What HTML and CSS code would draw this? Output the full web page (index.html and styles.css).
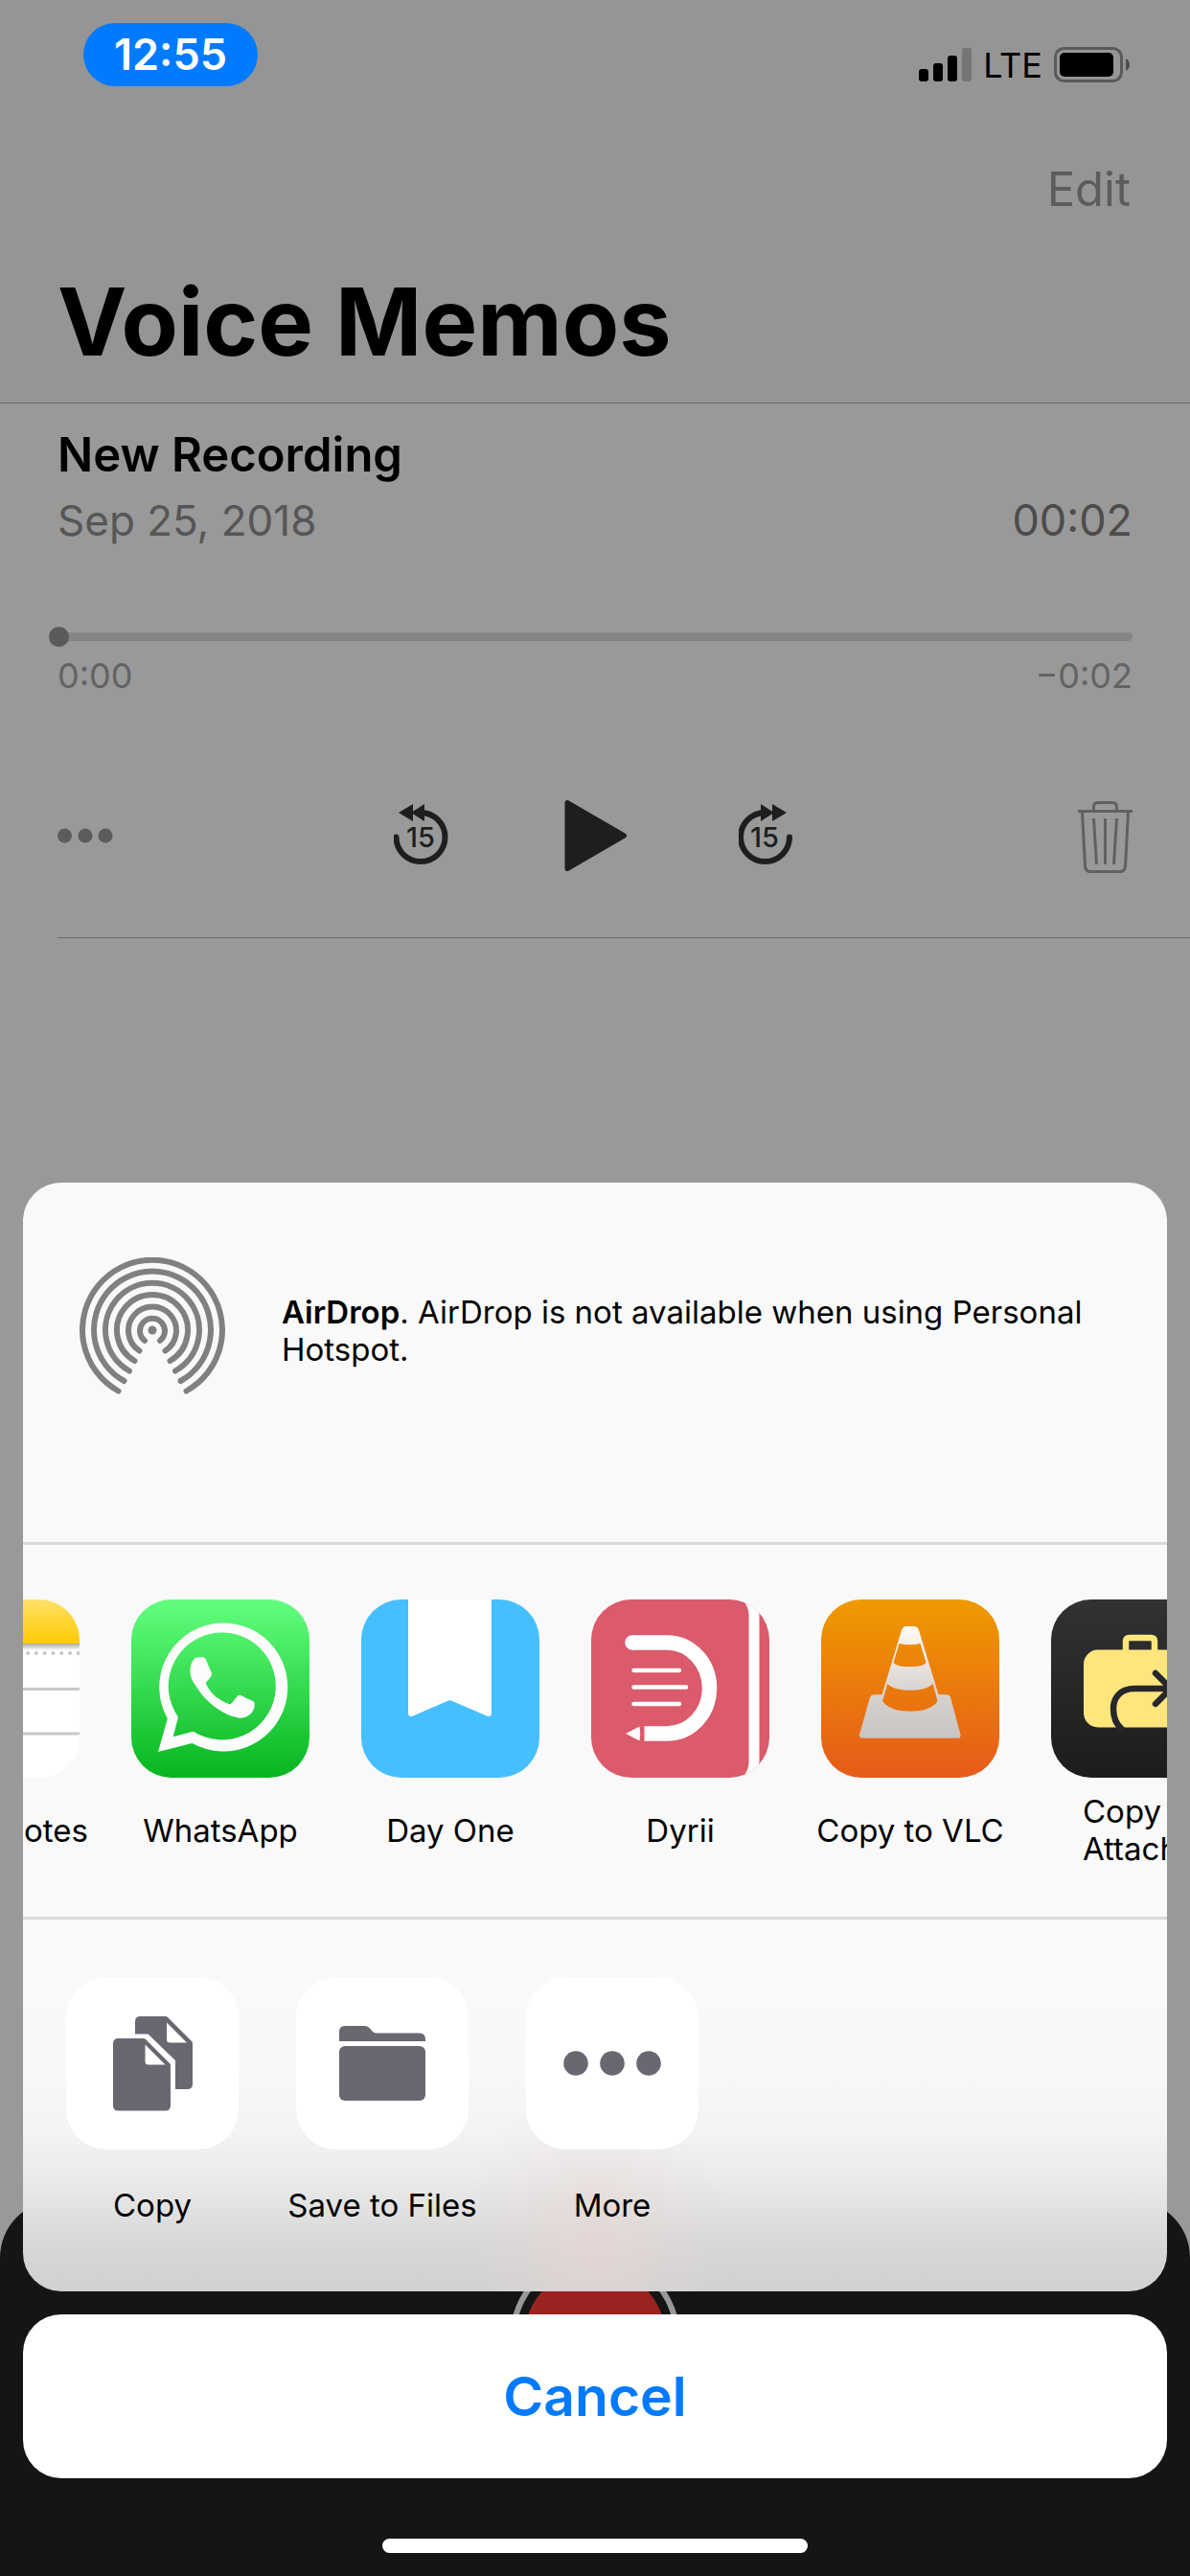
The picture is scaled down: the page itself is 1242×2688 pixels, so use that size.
FILE: index.html
```html
<!DOCTYPE html>
<html lang="en">
<head>
<meta charset="utf-8">
<meta name="viewport" content="width=device-width, initial-scale=1">
<title>Voice Memos</title>
<link rel="stylesheet" href="styles.css">
</head>
<body>
<div class="screen">
  <div class="top">
    <div class="status">
      <span class="clock">12:55</span>
      <div class="status-right">
        <svg width="55" height="36" viewBox="0 0 55 36" aria-hidden="true">
          <rect x="0" y="22" width="10" height="13" rx="3"/>
          <rect x="15" y="16" width="10" height="19" rx="3"/>
          <rect x="30" y="8" width="10" height="27" rx="3"/>
          <rect x="45" y="0" width="10" height="35" rx="3" fill="#757575"/>
        </svg>
        <span class="network">LTE</span>
        <svg width="80" height="38" viewBox="0 0 80 38" aria-hidden="true">
          <rect x="1.500" y="1.500" width="69" height="34" rx="9" fill="none" stroke="#5a5a5a" stroke-width="3"/>
          <rect x="6" y="6" width="56" height="25" rx="5"/>
          <path d="M75 12Q79 14 79 18.500T75 25Z" fill="#4f4f4f"/>
        </svg>
      </div>
    </div>
    <div class="toolbar"><button class="edit" type="button">Edit</button></div>
    <h1 class="title">Voice Memos</h1>
  </div>

  <main class="memo">
    <h2 class="memo-name">New Recording</h2>
    <div class="memo-meta"><span>Sep 25, 2018</span><span class="memo-length">00:02</span></div>
    <input class="scrubber" type="range" min="0" max="2" value="0" aria-label="Playback position">
    <div class="times"><span>0:00</span><span>−0:02</span></div>
    <div class="controls">
      <button class="icon-button" type="button" aria-label="More options">
        <svg width="58" height="80" viewBox="0 0 58 80" fill="#5c5c5c"><circle cx="7.500" cy="39" r="7.500"/><circle cx="29" cy="39" r="7.500"/><circle cx="50" cy="39" r="7.500"/></svg>
      </button>
      <div class="transport">
        <button class="icon-button" type="button" aria-label="Back 15 seconds">
          <svg width="60" height="80" viewBox="0 0 60 80" fill="#1e1e1e">
            <path d="M2.500 40.500A25.500 25.500 0 1 0 28 15" fill="none" stroke="#1e1e1e" stroke-width="6" stroke-linecap="round"/>
            <path d="M5 15L20 6V24ZM18 15L32 6V24Z"/>
            <text x="28" y="51" class="skip-text">15</text>
          </svg>
        </button>
        <button class="icon-button" type="button" aria-label="Play">
          <svg width="80" height="80" viewBox="0 0 80 80"><path d="M11 4.500V73.500L70.500 39Z" fill="#1e1e1e" stroke="#1e1e1e" stroke-width="5" stroke-linejoin="round"/></svg>
        </button>
        <button class="icon-button" type="button" aria-label="Forward 15 seconds">
          <svg width="60" height="80" viewBox="0 0 60 80" fill="#1e1e1e">
            <path d="M53 40.500A25.500 25.500 0 1 1 27.500 15" fill="none" stroke="#1e1e1e" stroke-width="6" stroke-linecap="round"/>
            <path d="M50 15L35 6V24ZM37 15L23 6V24Z"/>
            <text x="27" y="51" class="skip-text">15</text>
          </svg>
        </button>
      </div>
      <button class="icon-button trash" type="button" aria-label="Delete">
        <svg width="57" height="80" viewBox="0 0 57 80" fill="none" stroke="#616161" stroke-width="3">
          <path d="M0 13.500H57M16.500 13V9Q16.500 4.500 21 4.500H36Q40.500 4.500 40.500 9V13M4.500 14L7.500 71Q8 76.500 13 76.500H44Q49 76.500 49.500 71L52.500 14M16.500 21L19.500 69M28.500 21V69M40.500 21L37.500 69"/>
        </svg>
      </button>
    </div>
  </main>

  <div class="recorder">
    <button class="record" type="button" aria-label="Record"></button>
  </div>
</div>

<div class="overlay">
  <section class="sheet" aria-label="Share">
    <div class="airdrop">
      <svg class="airdrop-icon" width="152" height="152" viewBox="-76 -76 152 152" fill="none" stroke="#808080" stroke-width="6" stroke-linecap="round" aria-hidden="true">
        <circle r="4.500" fill="#808080" stroke="none"/>
        <path d="M-8 11A13 13 0 1 1 8 11M-13.500 21.500A25 25 0 1 1 13.500 21.500M-18.500 32A37 37 0 1 1 18.500 32M-24 42.500A49 49 0 1 1 24 42.500M-29.500 53A61 61 0 1 1 29.500 53M-35.500 63.500A73 73 0 1 1 35.500 63.500"/>
      </svg>
      <p class="airdrop-text"><b>AirDrop</b>. AirDrop is not available when using Personal Hotspot.</p>
    </div>

    <div class="row apps">
      <button class="item" type="button">
        <svg class="app-icon" viewBox="0 0 186 186" aria-hidden="true">
          <defs>
            <linearGradient id="notes" x2="0" y2="1"><stop stop-color="#ffe169"/><stop offset="1" stop-color="#ffca00"/></linearGradient>
            <linearGradient id="fold" x2="0" y2="1"><stop stop-color="#a8a8a8"/><stop offset="1" stop-color="#fff"/></linearGradient>
          </defs>
          <path d="M0 0H186V186H0Z" fill="#fff"/><path d="M0 0H186V46H0Z" fill="url(#notes)"/><path d="M0 46H186V53H0Z" fill="url(#fold)"/>
          <path d="M123.200 56H186" stroke="#c7c7cc" stroke-width="4" stroke-linecap="round" stroke-dasharray="0.100 8.700"/>
          <path d="M0 93.500H186M0 140H186" stroke="#c7c7cc" stroke-width="3"/>
        </svg>
        <span class="label">Add to Notes</span>
      </button>
      <button class="item" type="button">
        <svg class="app-icon" viewBox="0 0 186 186" aria-hidden="true">
          <defs>
            <linearGradient id="wa" x2="0" y2="1"><stop stop-color="#62ff7e"/><stop offset="1" stop-color="#05b51f"/></linearGradient>
          </defs>
          <path d="M0 0H186V186H0Z" fill="url(#wa)"/>
          <path fill="#fcfcfc" fill-rule="evenodd" d="M28 159L37.800 124.300A67 67 0 1 1 63.500 150ZM49 122.700L43.700 143.300L64.700 137.700A56 56 0 1 0 49 122.700Z"/>
          <path fill="#fcfcfc" d="M67 61C70 60 73 60 75 60Q77 61 78 63L84 77Q84.500 79 82 82L78.500 86C77.500 87.500 78 88 79 90C84 99 91 105 102 109Q104 109.500 105 108L110.500 101Q112 99 114 100L127 106Q129 107 128.700 110C128.500 119 120 124 112.900 123.700C96 121 80 108 72 97C65 87 61 82 61.500 74C62 67 64 63 67 61Z"/>
        </svg>
        <span class="label">WhatsApp</span>
      </button>
      <button class="item" type="button">
        <svg class="app-icon" viewBox="0 0 186 186" aria-hidden="true">
          <path d="M0 0H186V186H0Z" fill="#45bfff"/>
          <path d="M49 -1H136V118Q136 123.500 131 121.500L95 106Q92.500 104.500 90 106L54 121.500Q49 123.500 49 118Z" fill="#fff"/>
        </svg>
        <span class="label">Day One</span>
      </button>
      <button class="item" type="button">
        <svg class="app-icon" viewBox="0 0 186 186" aria-hidden="true">
          <path d="M0 0H186V186H0Z" fill="#db5a6b"/>
          <path d="M158 0Q164.500 8 164.500 16V170Q164.500 178 158 186H172Q175.500 176 175.500 168V18Q175.500 10 172 0Z" fill="#fff"/>
          <path d="M43 45H79A44.500 47.500 0 0 1 79 140H55.500" fill="none" stroke="#fff" stroke-width="15.500"/>
          <circle cx="43" cy="45" r="7.750" fill="#fff"/>
          <path d="M36 140L50.500 132.500Q52 140 50.500 147.500Z" fill="#fff"/>
          <path d="M44.500 74H92M44.500 91.500H99M44.500 109H92" stroke="#fff" stroke-width="4.500" stroke-linecap="round"/>
        </svg>
        <span class="label">Dyrii</span>
      </button>
      <button class="item" type="button">
        <svg class="app-icon" viewBox="0 0 186 186" aria-hidden="true">
          <defs>
            <linearGradient id="vlc" gradientUnits="userSpaceOnUse" x1="0" y1="0" x2="0" y2="186"><stop stop-color="#ef9a00"/><stop offset="1" stop-color="#e65a19"/></linearGradient>
            <linearGradient id="cone" gradientUnits="userSpaceOnUse" x1="0" y1="28" x2="0" y2="145"><stop stop-color="#fffaf5"/><stop offset=".6" stop-color="#d7d2ce"/><stop offset="1" stop-color="#c8c4c1"/></linearGradient>
          </defs>
          <path d="M0 0H186V186H0Z" fill="url(#vlc)"/>
          <path fill="url(#cone)" d="M84 32Q85.500 28 89 28H97Q100.500 28 102 32L122.500 99.300H131Q134 99.300 135 102L145.500 141Q146 144.700 143 144.700H43Q39.500 144.700 40 141L51 102Q52 99.300 55 99.300H63.500Z"/>
          <path fill="url(#vlc)" d="M81.500 46Q92.500 48.500 103.500 46L109.500 66Q106 70.300 92.500 70.300T75.500 66ZM69.400 87.700Q75 94.700 93 94.700T116.500 87.700L121.500 106Q115 116.700 93 116.700T64 106Z"/>
        </svg>
        <span class="label">Copy to VLC</span>
      </button>
      <button class="item" type="button">
        <svg class="app-icon" viewBox="0 0 186 186" aria-hidden="true">
          <defs>
            <linearGradient id="dark" x2="0" y2="1"><stop stop-color="#313234"/><stop offset="1" stop-color="#1c1c1c"/></linearGradient>
          </defs>
          <path d="M0 0H186V186H0Z" fill="url(#dark)"/>
          <rect x="34" y="52.500" width="118" height="81" rx="15" fill="#ffe67c"/>
          <path d="M78 54V44Q78 40 82 40H104Q108 40 108 44V54" fill="none" stroke="#ffe67c" stroke-width="6.500"/>
          <path d="M74 135.500Q65 128 65 114C65 102 73 93 87 93H125M109 77L125 93L109 109" fill="none" stroke="#26272a" stroke-width="6.500" stroke-linecap="round"/>
        </svg>
        <span class="label label-wrap">Copy Attach</span>
      </button>
    </div>

    <div class="row actions">
      <button class="item" type="button">
        <span class="tile">
          <svg width="83" height="99" viewBox="2 0 83 99" aria-hidden="true">
            <path fill="#696871" fill-rule="evenodd" d="M25 5.500Q25 0 30.500 0H57Q58 0 59 1L84 26Q85 27 85 28V70.500Q85 76 79.500 76H67V46L38.500 18.500H25ZM58 6.500V24Q58 27.500 61.500 27.500H79Z"/>
            <path fill="#696871" fill-rule="evenodd" d="M2 28.500Q2 23 7.500 23H34Q35 23 36 24L61 49Q62 50 62 51V93Q62 98.500 56.500 98.500H7.500Q2 98.500 2 93ZM35.500 29.500V47Q35.500 50.500 39 50.500H56.500Z"/>
          </svg>
        </span>
        <span class="label">Copy</span>
      </button>
      <button class="item" type="button">
        <span class="tile">
          <svg width="90" height="78" viewBox="0 0 90 78" fill="#696871" aria-hidden="true">
            <path d="M0 16V6Q0 0 6 0H27Q30 0 32 2.500L35 6Q36.500 7.500 39 7.500H84Q90 7.500 90 14V16Z"/>
            <rect y="21" width="90" height="57" rx="6"/>
          </svg>
        </span>
        <span class="label">Save to Files</span>
      </button>
      <button class="item" type="button">
        <span class="tile">
          <svg width="102" height="26" viewBox="0 0 102 26" fill="#696871" aria-hidden="true"><circle cx="13" cy="13" r="12.800"/><circle cx="51" cy="13" r="12.800"/><circle cx="89" cy="13" r="12.800"/></svg>
        </span>
        <span class="label">More</span>
      </button>
    </div>
  </section>
  <button class="cancel" type="button">Cancel</button>
  <div class="home-bar"></div>
</div>
</body>
</html>
```

FILE: styles.css
```css
* {
  box-sizing: border-box;
}

body {
  margin: 0;
  background: #999;
  color: #000;
  font-family: Inter, "Liberation Sans", sans-serif;
}

button {
  margin: 0;
  padding: 0;
  border: 0;
  background: none;
  color: inherit;
  font: inherit;
}

svg {
  display: block;
  flex: none;
}

.screen {
  display: flex;
  flex-direction: column;
  min-height: 100vh;
}

/* Header */
.top {
  padding: 24px 62px 24px 60px;
  border-bottom: 1px solid #666;
  background: #959595;
}

.status {
  display: flex;
  justify-content: space-between;
  align-items: flex-start;
  padding-left: 27px;
}

.clock {
  width: 182px;
  border-radius: 33px;
  background: #007aff;
  color: #fff;
  font-size: 45px;
  font-weight: 600;
  line-height: 66px;
  text-align: center;
}

.status-right {
  display: flex;
  align-items: center;
  gap: 12px;
  padding-top: 24px;
}

.network {
  font-size: 36px;
  line-height: 40px;
}

.toolbar {
  display: flex;
  justify-content: flex-end;
  padding: 78px 0 48px;
}

.edit {
  color: #5c5c5c;
  font-size: 49px;
  line-height: 60px;
}

.title {
  margin: 0;
  font-size: 97px;
  font-weight: 700;
  line-height: 120px;
}

/* Selected recording */
.memo {
  margin-left: 60px;
  padding: 24px 60px 65px 0;
  border-bottom: 1px solid #6b6b6b;
}

.memo-name {
  margin: 0;
  font-size: 49px;
  font-weight: 600;
  line-height: 60px;
}

.memo-meta,
.times {
  display: flex;
  justify-content: space-between;
}

.memo-meta {
  margin-top: 11px;
  color: #565656;
  font-size: 44px;
  line-height: 54px;
}

.memo-length {
  color: #4c4c4c;
  font-size: 45px;
}

.scrubber {
  display: block;
  width: calc(100% + 9px);
  height: 21px;
  margin: 84px 0 0 -9px;
  appearance: none;
  background: none;
}

.scrubber::-webkit-slider-runnable-track {
  height: 9px;
  border-radius: 5px;
  background: #858585;
}

.scrubber::-webkit-slider-thumb {
  width: 21px;
  height: 21px;
  margin-top: -6px;
  border-radius: 50%;
  appearance: none;
  background: #5a5a5c;
}

.times {
  margin-top: 9px;
  color: #636363;
  font-size: 36px;
  line-height: 42px;
}

.controls {
  display: grid;
  grid-template-columns: 1fr auto 1fr;
  align-items: center;
  margin-top: 107px;
}

.icon-button {
  justify-self: start;
}

.trash {
  justify-self: end;
}

.transport {
  display: flex;
  gap: 110px;
}

.skip-text {
  font-size: 29px;
  font-weight: 500;
  text-anchor: middle;
}

/* Recording panel behind the sheet */
.recorder {
  display: flex;
  justify-content: center;
  align-items: flex-start;
  height: 392px;
  margin-top: auto;
  padding-top: 55px;
  border-radius: 60px 60px 0 0;
  background: #151515;
}

.record {
  width: 178px;
  height: 178px;
  padding: 9px;
  border: 6px solid #999;
  border-radius: 50%;
  background: #98231f content-box;
}

/* Share sheet */
.overlay {
  position: absolute;
  right: 0;
  bottom: 0;
  left: 0;
  display: flex;
  flex-direction: column;
  padding: 0 24px 24px;
}

.sheet {
  overflow: hidden;
  border-radius: 40px;
  background:
    radial-gradient(140px 170px at 50% 96%, rgba(232, 214, 212, .7), rgba(232, 214, 212, .25) 55%, rgba(232, 214, 212, 0)),
    linear-gradient(to top, #d1d1d1, #d6d6d6 40px, #e0e0e0 80px, #ebebeb 120px, #f3f3f3 165px, #f8f8f8 230px, #f9f9f9 300px);
}

.airdrop {
  display: flex;
  align-items: flex-start;
  gap: 59px;
  padding: 78px 60px 145px 59px;
}

.airdrop-text {
  flex: 1;
  margin: 0;
  padding-top: 38px;
  font-size: 33px;
  line-height: 39px;
}

.airdrop-text b {
  font-weight: 600;
}

.row {
  display: flex;
  border-top: 3px solid #d9d9dd;
}

.apps {
  gap: 54px;
  padding: 57px 0 51px;
}

/* The list is scrolled part of the way along */
.apps .item:first-child {
  margin-left: -127px;
}

.actions {
  gap: 60px;
  padding: 60px 45px 51px;
}

.item {
  display: flex;
  flex: none;
  flex-direction: column;
  align-items: center;
  gap: 16px;
}

.apps .item {
  width: 186px;
}

.actions .item {
  gap: 19px;
  width: 180px;
}

.app-icon {
  width: 186px;
  height: 186px;
  border-radius: 42px;
}

.tile {
  display: flex;
  justify-content: center;
  align-items: center;
  width: 180px;
  height: 180px;
  border-radius: 42px;
  background: #fff;
}

.label {
  display: flex;
  align-items: center;
  height: 78px;
  font-size: 33px;
  line-height: 39px;
  white-space: nowrap;
}

.label-wrap {
  width: 120px;
  text-align: left;
  white-space: normal;
}

.cancel {
  margin-top: 24px;
  border-radius: 40px;
  background: #fff;
  color: #007aff;
  font-size: 57px;
  font-weight: 600;
  line-height: 171px;
}

.home-bar {
  align-self: center;
  width: 444px;
  height: 15px;
  margin-top: 63px;
  border-radius: 8px;
  background: #fff;
}
```
